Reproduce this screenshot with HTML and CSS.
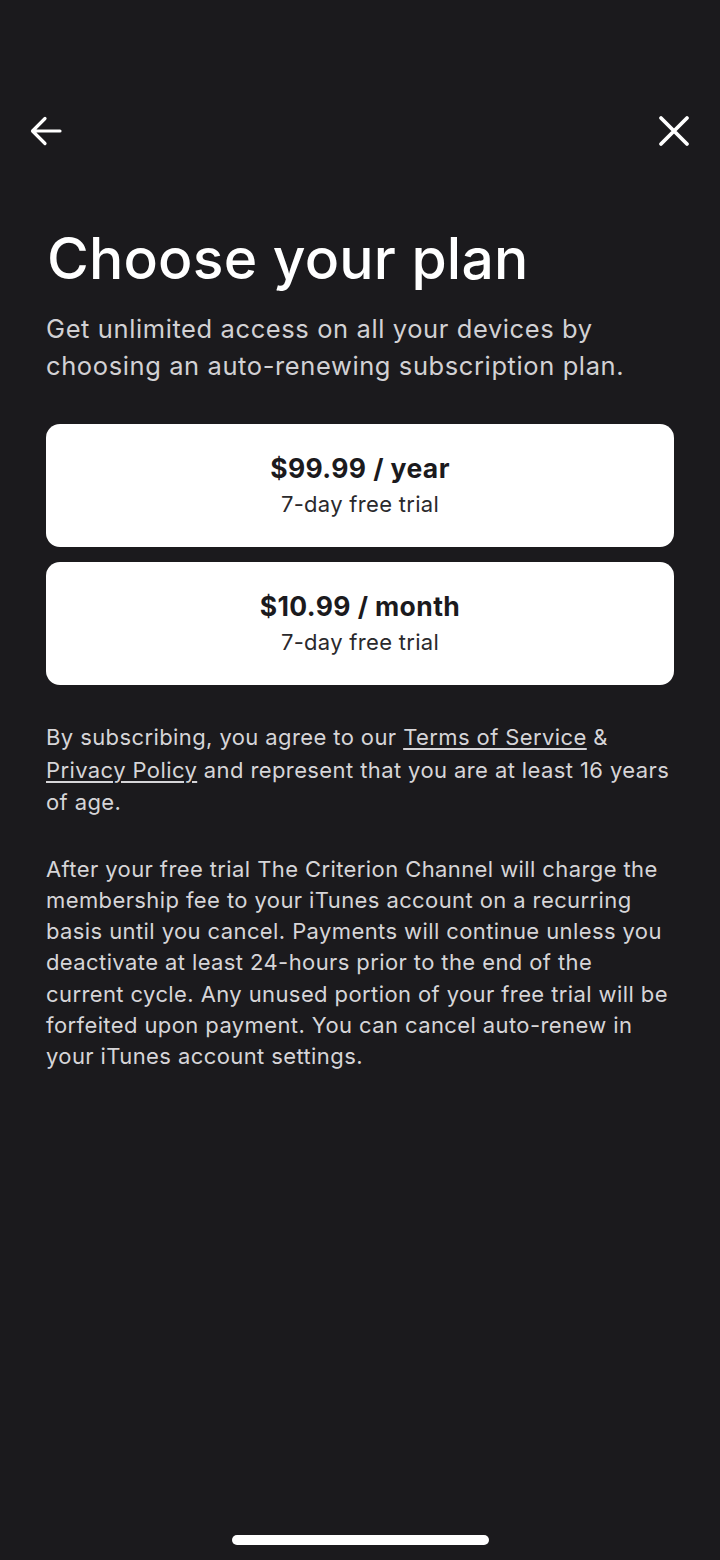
FILE: index.html
```html
<!DOCTYPE html>
<html lang="en">
<head>
    <meta charset="UTF-8">
    <title>Choose your plan</title>
    <link rel="stylesheet" href="styles.css">
</head>
<body>
<div class="screen">
    <div class="nav">
        <button class="icon-btn" aria-label="Back">
            <svg width="34" height="34" viewBox="0 0 34 34">
                <path d="M31 17H4M16 4.5L3.5 17L16 29.5" fill="none" stroke="#fff" stroke-width="3.2" stroke-linecap="round" stroke-linejoin="round"/>
            </svg>
        </button>
        <button class="icon-btn" aria-label="Close">
            <svg width="34" height="34" viewBox="0 0 34 34">
                <path d="M4 4L30 30M30 4L4 30" fill="none" stroke="#fff" stroke-width="3.8" stroke-linecap="round"/>
            </svg>
        </button>
    </div>

    <div class="content">
        <h1 class="title">Choose your plan</h1>
        <p class="lead">Get unlimited access on all your devices by choosing an auto-renewing subscription plan.</p>

        <div class="plans">
            <div class="plan">
                <div class="price">$99.99 / year</div>
                <div class="trial">7-day free trial</div>
            </div>
            <div class="plan">
                <div class="price">$10.99 / month</div>
                <div class="trial">7-day free trial</div>
            </div>
        </div>

        <p class="terms">By subscribing, you agree to our <a href="#">Terms of Service</a> &amp; <a href="#">Privacy Policy</a> and represent that you are at least 16 years of age.</p>

        <p class="fine">After your free trial The Criterion Channel will charge the membership fee to your iTunes account on a recurring basis until you cancel. Payments will continue unless you deactivate at least 24-hours prior to the end of the current cycle. Any unused portion of your free trial will be forfeited upon payment. You can cancel auto-renew in your iTunes account settings.</p>
    </div>

    <div class="home-bar"></div>
</div>
</body>
</html>
```

FILE: styles.css
```css
*{margin: 0;padding: 0;box-sizing: border-box;}
html, body {
    background: #1b1a1d;
}
body {
    font-family: Inter, "Noto Sans", sans-serif;
    color: #fff;
}
.screen {
    height: 1560px;
    display: flex;
    flex-direction: column;
}
/*========nav========*/
.nav {
    display: flex;
    justify-content: space-between;
    align-items: center;
    padding: 114px 29px 0 29px;
}
.icon-btn {
    background: none;
    border: none;
    width: 34px;
    height: 34px;
    display: flex;
}
/*========content========*/
.content {
    padding: 0 46px;
    flex: 1;
}
.title {
    font-size: 57px;
    font-weight: 500;
    letter-spacing: 0.2px;
    line-height: 70px;
    margin-top: 76px;
    margin-left: 1px;
}
.lead {
    font-size: 25.5px;
    letter-spacing: 0.6px;
    line-height: 37px;
    color: #d2d1d4;
    margin-top: 16px;
}
.plans {
    display: flex;
    flex-direction: column;
    gap: 15px;
    margin-top: 40px;
}
.plan {
    background: #fff;
    border-radius: 14px;
    height: 123px;
    display: flex;
    flex-direction: column;
    align-items: center;
    justify-content: center;
    color: #1b1a1d;
}
.price {
    font-size: 26.5px;
    font-weight: 700;
    letter-spacing: 0.4px;
    line-height: 32px;
}
.trial {
    font-size: 22px;
    letter-spacing: 0.3px;
    line-height: 30px;
    color: #2a292c;
    margin-top: 5px;
}
.terms {
    font-size: 22px;
    letter-spacing: 0.4px;
    line-height: 32.5px;
    color: #d6d5d8;
    margin-top: 36px;
}
.terms a {
    color: #d6d5d8;
    text-decoration: underline;
    text-underline-offset: 3px;
    text-decoration-thickness: 1.5px;
}
.fine {
    font-size: 22px;
    letter-spacing: 0.4px;
    line-height: 31.3px;
    color: #d6d5d8;
    margin-top: 35px;
}
/*========home bar========*/
.home-bar {
    width: 257px;
    height: 10px;
    border-radius: 5px;
    background: #fff;
    margin: 0 auto 15px auto;
}
```
